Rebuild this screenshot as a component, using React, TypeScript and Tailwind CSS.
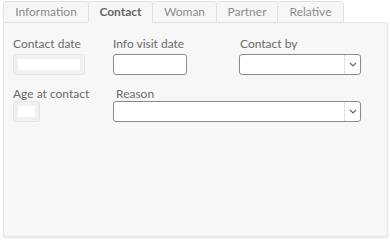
import React from 'react';

const tabs = [
  { label: 'Information', w: 'w-[86px]' },
  { label: 'Contact', w: 'w-[65px]', active: true },
  { label: 'Woman', w: 'w-[65px]' },
  { label: 'Partner', w: 'w-[62px]' },
  { label: 'Relative', w: 'w-[67px]' },
];

const Chevron = () => (
  <svg width="8" height="5" viewBox="0 0 8 5" fill="none">
    <path d="M1 1l3 3 3-3" stroke="#666" strokeWidth="1.2" />
  </svg>
);

const Select: React.FC<{ className: string }> = ({ className }) => (
  <div className={`${className} flex h-[21px] rounded-[3px] border border-[#8a8a8a] bg-white`}>
    <div className="flex-1" />
    <div className="flex w-[16px] items-center justify-center border-l border-[#e3e3e3]">
      <Chevron />
    </div>
  </div>
);

const DisabledInput: React.FC<{ className: string }> = ({ className }) => (
  <div className={`${className} h-[21px] rounded-[3px] border border-[#e4e4e4] bg-[#f1f1f1] p-[4px]`}>
    <div className="h-full w-full bg-white" />
  </div>
);

export default function App() {
  return (
    <div
      className="h-[240px] w-[390px] bg-white pl-[3px] pt-[1px] text-[12px]"
      style={{ fontFamily: 'Lato, "Noto Sans", sans-serif' }}
    >
      <div className="relative z-10 flex h-[22px]">
        {tabs.map((t) => (
          <div
            key={t.label}
            className={`${t.w} -mr-px flex items-center justify-center rounded-t-[3px] border border-[#e2e2e2] ${
              t.active
                ? 'border-b-[#f7f7f7] bg-[#f7f7f7] font-bold text-[#666666]'
                : 'bg-[#f7f7f7] text-[#8c8c8c]'
            }`}
          >
            {t.label}
          </div>
        ))}
      </div>
      <div className="-mt-px h-[215px] w-[385px] rounded-[3px] border border-[#e6e6e6] bg-[#f7f7f7] shadow-[0_1px_2px_rgba(0,0,0,0.12)]">
        <div className="flex pl-[9px] pt-[14px] text-[#6b6b6b]">
          <div className="w-[100px]">
            <div className="h-[17px] leading-[14px]">Contact date</div>
            <DisabledInput className="w-[72px]" />
          </div>
          <div className="w-[126px]">
            <div className="h-[17px] leading-[14px]">Info visit date</div>
            <div className="h-[21px] w-[74px] rounded-[3px] border border-[#8a8a8a] bg-white" />
          </div>
          <div>
            <div className="h-[17px] pl-px leading-[14px]">Contact by</div>
            <Select className="w-[122px]" />
          </div>
        </div>
        <div className="flex pl-[9px] pt-[12px] text-[#6b6b6b]">
          <div className="w-[100px]">
            <div className="h-[14px] leading-[14px]">Age at contact</div>
            <DisabledInput className="w-[27px]" />
          </div>
          <div>
            <div className="h-[14px] pl-[3px] leading-[14px]">Reason</div>
            <Select className="w-[248px]" />
          </div>
        </div>
      </div>
    </div>
  );
}
